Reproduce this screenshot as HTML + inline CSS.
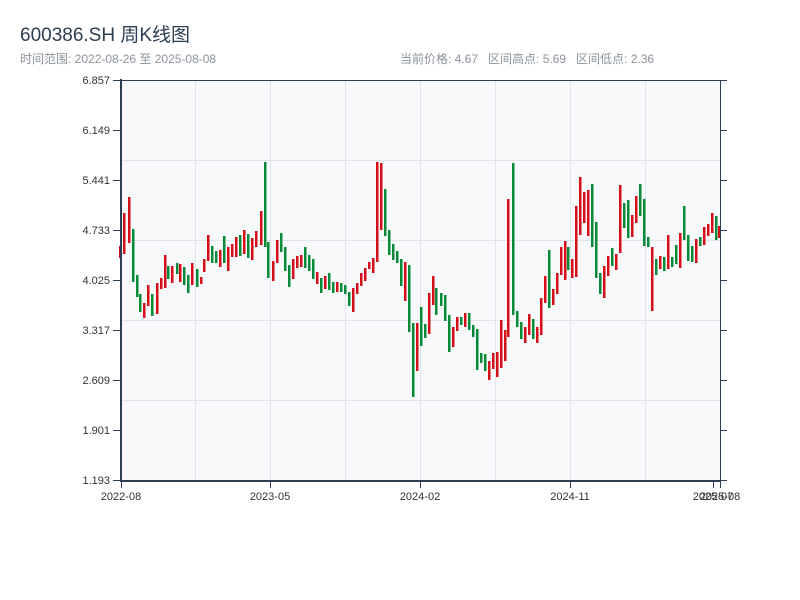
<!DOCTYPE html>
<html><head><meta charset="utf-8"><style>
html,body{margin:0;padding:0;background:#fff;width:800px;height:600px;overflow:hidden;font-family:"Liberation Sans","Noto Sans CJK SC",sans-serif}
</style></head><body>
<svg id="s" width="800" height="600" xmlns="http://www.w3.org/2000/svg" style="position:absolute;left:0;top:0;font-family:'Liberation Sans','Noto Sans CJK SC',sans-serif">
<text x="20" y="41" font-size="19" fill="#2c3e50">600386.SH 周K线图</text>
<text x="20" y="63" font-size="12" fill="#8c939b">时间范围: 2022-08-26 至 2025-08-08</text>
<text x="400" y="63" font-size="12" fill="#8c939b">当前价格: 4.67&#160;&#160;&#160;区间高点: 5.69&#160;&#160;&#160;区间低点: 2.36</text>
<rect x="121" y="80" width="599" height="400" fill="#f7f9fb"/>
<g stroke="#e1e4e8" stroke-width="1">
<line x1="121" y1="160.5" x2="720" y2="160.5"/><line x1="121" y1="240.5" x2="720" y2="240.5"/>
<line x1="121" y1="320.5" x2="720" y2="320.5"/><line x1="121" y1="400.5" x2="720" y2="400.5"/>
<line x1="195.5" y1="80" x2="195.5" y2="480"/><line x1="270.5" y1="80" x2="270.5" y2="480"/>
<line x1="345.5" y1="80" x2="345.5" y2="480"/><line x1="420.5" y1="80" x2="420.5" y2="480"/>
<line x1="495.5" y1="80" x2="495.5" y2="480"/><line x1="570.5" y1="80" x2="570.5" y2="480"/>
<line x1="645.5" y1="80" x2="645.5" y2="480"/>
</g>
<g id="c"></g>
<g stroke="#2c3e50" fill="none">
<line x1="121" y1="80.5" x2="721" y2="80.5" stroke-width="1"/>
<line x1="720.5" y1="80" x2="720.5" y2="481" stroke-width="1"/>
<line x1="121" y1="79" x2="121" y2="482" stroke-width="2"/>
<line x1="120" y1="481" x2="721" y2="481" stroke-width="2"/>
</g>
<g id="t" stroke="#2c3e50" stroke-width="1"></g>
<g id="l" font-size="11" fill="#333"></g>
</svg>
<script>
var d=[[120,246,258,'r'],[124,213,254,'r'],[129,197,243,'r'],[133,229,282,'g'],[137,275,297,'g'],[140,294,312,'g'],[144,303,318,'r'],[148,285,306,'r'],[152,294,316,'g'],[157,283,314,'r'],[161,278,289,'r'],[165,255,288,'r'],[168,266,279,'g'],[172,266,283,'r'],[177,263,274,'g'],[180,264,282,'r'],[184,267,285,'g'],[188,275,293,'g'],[192,263,285,'r'],[197,269,287,'g'],[201,277,284,'r'],[204,259,272,'r'],[208,235,261,'r'],[212,246,263,'g'],[216,251,263,'g'],[220,250,267,'r'],[224,236,263,'g'],[228,247,271,'r'],[232,244,257,'r'],[236,237,257,'r'],[240,235,256,'g'],[244,230,254,'r'],[248,234,258,'g'],[252,238,260,'r'],[256,231,247,'r'],[261,211,245,'r'],[265,162,247,'g'],[268,242,278,'g'],[273,261,281,'r'],
[277,240,263,'r'],[281,233,252,'g'],[285,247,271,'g'],[289,265,287,'g'],[293,259,279,'r'],[297,256,268,'r'],[301,255,267,'r'],[305,247,268,'g'],[309,255,271,'g'],[313,259,279,'g'],[317,272,284,'r'],[321,278,293,'g'],[325,276,289,'r'],[329,273,290,'g'],[333,282,293,'g'],[337,282,292,'r'],[341,283,292,'g'],[345,285,294,'g'],[349,292,306,'g'],[353,288,312,'r'],[357,283,294,'r'],[361,273,286,'r'],[365,268,281,'r'],[369,262,269,'r'],[373,258,273,'r'],[377,162,262,'r'],[381,163,230,'r'],[385,189,236,'g'],[389,230,255,'g'],[393,244,260,'g'],[397,251,263,'g'],[401,259,286,'g'],[405,262,301,'r'],[409,265,332,'g'],[413,323,397,'g'],[417,323,371,'r'],[421,307,346,'g'],[425,324,338,'g'],[429,293,334,'r'],
[433,276,305,'r'],[436,288,315,'g'],[441,293,306,'g'],[445,295,321,'g'],[449,315,352,'g'],[453,327,347,'r'],[457,317,331,'r'],[461,317,325,'g'],[465,313,327,'r'],[469,313,330,'g'],[473,325,337,'g'],[477,329,370,'g'],[481,353,363,'g'],[485,354,371,'g'],[489,361,380,'r'],[493,353,369,'r'],[497,352,377,'r'],[501,320,368,'r'],[505,330,361,'r'],[508,199,337,'r'],[513,163,315,'g'],[517,311,327,'g'],[521,322,339,'g'],[525,327,343,'r'],[529,314,335,'r'],[533,319,339,'g'],[537,327,343,'r'],[541,298,335,'r'],[545,276,303,'r'],[549,250,308,'g'],[553,289,305,'r'],[557,273,294,'r'],[561,247,275,'r'],[565,241,280,'r'],[568,247,270,'g'],
[572,259,278,'r'],[576,206,277,'r'],[580,177,235,'r'],[584,192,223,'r'],[588,190,236,'r'],[592,184,247,'g'],[596,222,278,'g'],[600,273,294,'g'],[604,266,298,'r'],[608,256,276,'r'],[612,248,266,'g'],[616,254,270,'r'],[620,185,253,'r'],[624,203,228,'g'],[628,200,238,'g'],[632,215,237,'r'],[636,196,223,'r'],[640,184,216,'g'],[644,199,246,'g'],[648,237,247,'g'],[652,247,311,'r'],[656,259,275,'g'],[660,256,269,'r'],[664,257,271,'g'],[668,235,269,'r'],[672,257,267,'g'],[676,245,264,'g'],[680,233,268,'r'],[684,206,240,'g'],[688,235,261,'g'],[692,246,262,'g'],[696,239,263,'r'],[700,237,246,'g'],[704,227,245,'r'],[708,224,236,'r'],[712,213,233,'r'],[716,216,240,'g'],[719,226,238,'r']];
var c=document.getElementById('c'),h='';
d.forEach(function(a){var col=a[3]=='r'?'#d40f1a':'#078a37';h+='<rect x="'+(a[0]-1)+'" y="'+a[1]+'" width="2.5" height="'+(a[2]-a[1])+'" fill="'+col+'"/>';});
c.innerHTML=h;
var t='',l='',v=['6.857','6.149','5.441','4.733','4.025','3.317','2.609','1.901','1.193'];
for(var i=0;i<9;i++){var y=80+i*50;t+='<line x1="113" y1="'+(y+.5)+'" x2="121" y2="'+(y+.5)+'"/><line x1="720" y1="'+(y+.5)+'" x2="727" y2="'+(y+.5)+'"/>';l+='<text x="110" y="'+(y+4)+'" text-anchor="end">'+v[i]+'</text>';}
var xs=[[121,'2022-08'],[270,'2023-05'],[420,'2024-02'],[570,'2024-11'],[713,'2025-07'],[720,'2025-08']];
xs.forEach(function(a){t+='<line x1="'+(a[0]+.5)+'" y1="481" x2="'+(a[0]+.5)+'" y2="488"/>';l+='<text x="'+a[0]+'" y="500" text-anchor="middle">'+a[1]+'</text>';});
document.getElementById('t').innerHTML=t;document.getElementById('l').innerHTML=l;
</script>
</body></html>
